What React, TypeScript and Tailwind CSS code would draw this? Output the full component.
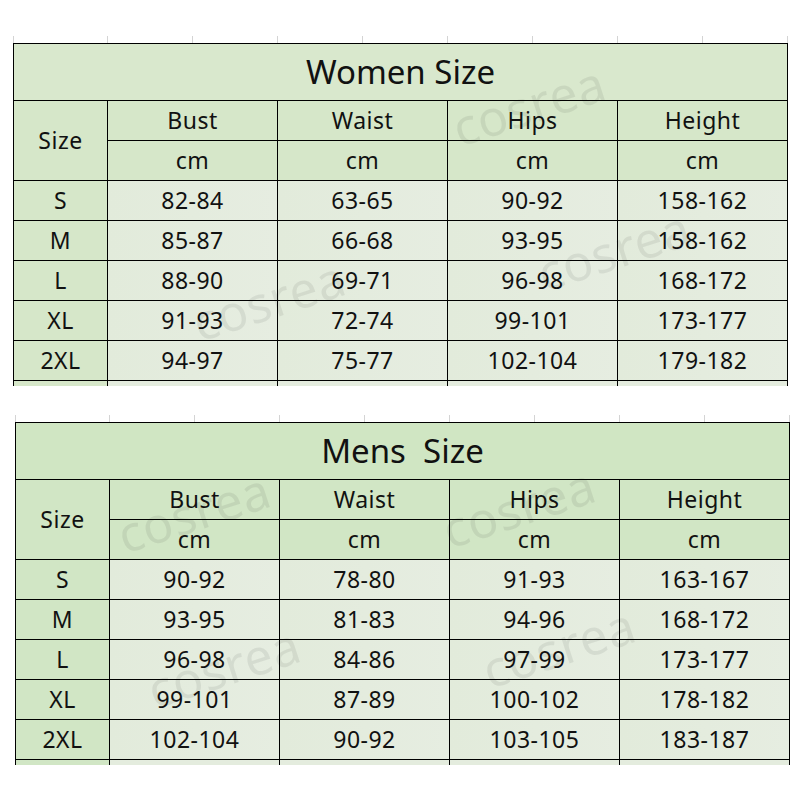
import React from 'react';

type Row = [string, string, string, string, string];

const women: Row[] = [
  ['S', '82-84', '63-65', '90-92', '158-162'],
  ['M', '85-87', '66-68', '93-95', '158-162'],
  ['L', '88-90', '69-71', '96-98', '168-172'],
  ['XL', '91-93', '72-74', '99-101', '173-177'],
  ['2XL', '94-97', '75-77', '102-104', '179-182'],
];

const mens: Row[] = [
  ['S', '90-92', '78-80', '91-93', '163-167'],
  ['M', '93-95', '81-83', '94-96', '168-172'],
  ['L', '96-98', '84-86', '97-99', '173-177'],
  ['XL', '99-101', '87-89', '100-102', '178-182'],
  ['2XL', '102-104', '90-92', '103-105', '183-187'],
];

const cols = ['Bust', 'Waist', 'Hips', 'Height'];

// faint spreadsheet grid ticks above each table
function Ticks() {
  return (
    <div className="flex h-[7px]">
      <div className="w-px bg-[#d4d4d4]" />
      {Array.from({ length: 9 }).map((_, i) => (
        <div key={i} className={`${i === 0 ? 'w-[94px]' : 'w-[85px]'} border-r border-[#d4d4d4]`} />
      ))}
    </div>
  );
}

function Watermark({ className }: { className: string }) {
  return (
    <div
      aria-hidden
      className={`absolute pointer-events-none text-[50px] leading-none text-black/[0.07] -rotate-[18deg] ${className}`}
    >
      cosrea
    </div>
  );
}

function SizeTable({ title, rows, titleBg, sizeBg }: { title: string; rows: Row[]; titleBg: string; sizeBg: string }) {
  const cell = 'flex items-center justify-center border-r border-b border-black';
  return (
    <div className="grid grid-cols-[94px_170px_170px_170px_170px] border-l border-t border-black w-[775px]">
      <div className={`${cell} col-span-5 h-[57px] text-[33px] whitespace-pre tracking-normal ${titleBg}`}>{title}</div>
      <div className={`${cell} row-span-2 ${sizeBg}`}>Size</div>
      {cols.map((c) => (
        <div key={c} className={`${cell} h-[40px] ${sizeBg}`}>{c}</div>
      ))}
      {cols.map((c) => (
        <div key={c + 'cm'} className={`${cell} h-[40px] ${sizeBg}`}>cm</div>
      ))}
      {rows.map((r) =>
        r.map((v, i) => (
          <div
            key={r[0] + i}
            className={`${cell} h-[40px] ${i === 0 ? sizeBg : 'bg-gradient-to-r from-[#e2ebdb] to-[#e6ede1]'}`}
          >
            {v}
          </div>
        ))
      )}
      {[0, 1, 2, 3, 4].map((i) => (
        <div
          key={'p' + i}
          className={`h-[5px] border-r border-black ${i === 0 ? sizeBg : 'bg-[#e4ecde]'}`}
        />
      ))}
    </div>
  );
}

export default function App() {
  return (
    <div
      className="w-[800px] h-[800px] bg-white text-[#111] text-[23px] tracking-[0.5px] relative overflow-hidden"
      style={{ fontFamily: '"Noto Sans", "Open Sans", sans-serif' }}
    >
      <div className="pt-[36px] pl-[13px]">
        <Ticks />
        <SizeTable title="Women Size" rows={women} titleBg="bg-[#d9e8cd]" sizeBg="bg-[#d6e7c9]" />
      </div>
      <div className="pt-[29px] pl-[15px]">
        <Ticks />
        <SizeTable title="Mens  Size" rows={mens} titleBg="bg-[#d0e6c3]" sizeBg="bg-[#d1e6c5]" />
      </div>

      <Watermark className="left-[450px] top-[80px]" />
      <Watermark className="left-[535px] top-[225px]" />
      <Watermark className="left-[190px] top-[275px]" />
      <Watermark className="left-[115px] top-[487px]" />
      <Watermark className="left-[440px] top-[482px]" />
      <Watermark className="left-[480px] top-[622px]" />
      <Watermark className="left-[145px] top-[642px]" />
    </div>
  );
}
